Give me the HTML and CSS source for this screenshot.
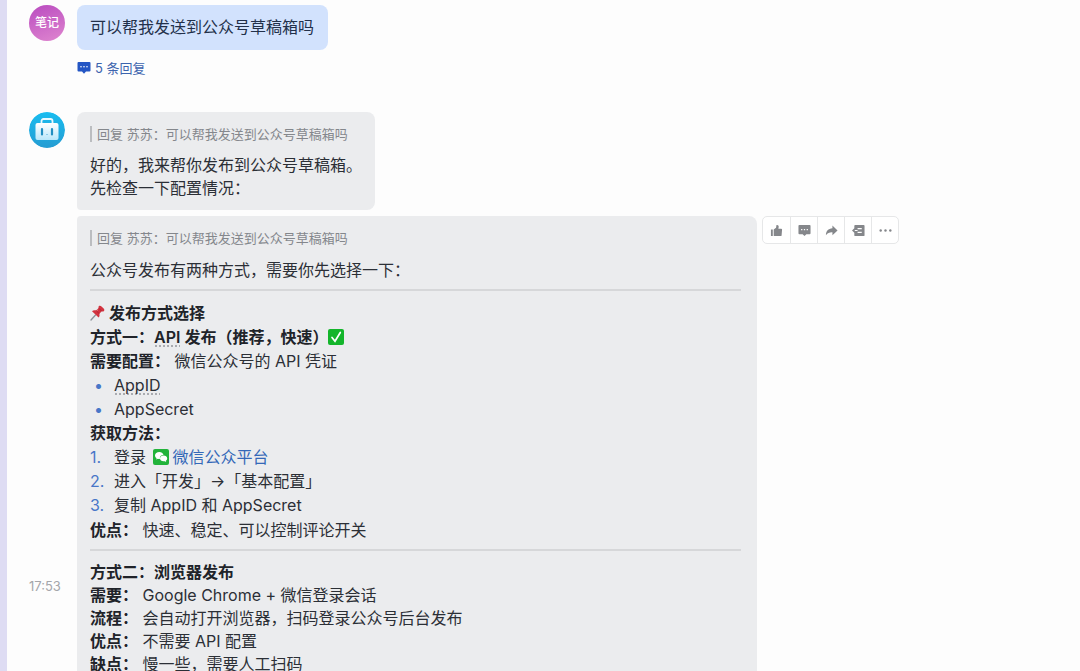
FILE: index.html
```html
<!DOCTYPE html>
<html lang="zh-CN">
<head>
<meta charset="utf-8">
<meta name="viewport" content="width=device-width, initial-scale=1">
<title>公众号草稿箱</title>
<link rel="stylesheet" href="styles.css">
</head>
<body>
<main class="chat">
  <section class="row row-user">
    <div class="side"><div class="avatar avatar-note">笔记</div></div>
    <div class="stack">
      <p class="bubble bubble-user">可以帮我发送到公众号草稿箱吗</p>
      <a class="replies" href="#thread">
        <svg width="14" height="14" viewBox="0 0 14 14" aria-hidden="true"><path d="M1.500 1h11a1 1 0 0 1 1 1v7.500a1 1 0 0 1-1 1H9L7 12.700 5 10.500H1.500a1 1 0 0 1-1-1V2a1 1 0 0 1 1-1z" fill="#2456c4"/><circle cx="4" cy="5.800" r=".8" fill="#fff"/><circle cx="7" cy="5.800" r=".8" fill="#fff"/><circle cx="10" cy="5.800" r=".8" fill="#fff"/></svg>
        <span>5 条回复</span>
      </a>
    </div>
  </section>

  <section class="row">
    <div class="side">
      <svg class="avatar" viewBox="0 0 36 36" aria-hidden="true">
        <defs><linearGradient id="sky" x1="0" y1="0" x2="0" y2="1"><stop offset="0" stop-color="#19bdf0"/><stop offset="1" stop-color="#259cd2"/></linearGradient>
        <linearGradient id="bag" x1="0" y1="0" x2="0" y2="1"><stop offset="0" stop-color="#fff"/><stop offset="1" stop-color="#b9e7fa"/></linearGradient></defs>
        <circle cx="18" cy="18" r="18" fill="url(#sky)"/>
        <path d="M12.500 12V9a2 2 0 0 1 2-2h7a2 2 0 0 1 2 2v3" fill="none" stroke="#e9f9ff" stroke-width="1.800"/>
        <rect x="6.500" y="11" width="23" height="17" rx="2" fill="url(#bag)"/>
        <path d="M13 17v5.500M23 17v5.500" stroke="#228fc2" stroke-width="2.200" stroke-linecap="round"/>
        <path d="M17 22.500h2" stroke="#8fcde8" stroke-width="1"/>
      </svg>
    </div>
    <div class="bubble bubble-bot bubble-short">
      <blockquote class="quote">回复 苏苏：可以帮我发送到公众号草稿箱吗</blockquote>
      <p>好的，我来帮你发布到公众号草稿箱。<br>先检查一下配置情况：</p>
    </div>
  </section>

  <section class="row row-long">
    <div class="side"><time class="time">17:53</time></div>
    <article class="bubble bubble-bot bubble-long">
      <blockquote class="quote">回复 苏苏：可以帮我发送到公众号草稿箱吗</blockquote>
      <p>公众号发布有两种方式，需要你先选择一下：</p>
      <hr class="rule">
      <div class="block">
        <p><svg class="pin" width="15" height="16" viewBox="0 0 15 16" aria-hidden="true"><path d="M5.500 10L1 15" stroke="#8b9197" stroke-width="1.300" stroke-linecap="round"/><path d="M8.800 1.200c.8-.7 2-.4 3 .5l1.600 1.500c1 .9 1.300 2 .6 2.700-.6.600-1.500.6-2.200.4L9.300 8.800c.5 1.400.3 3-.7 3.700L2 6.300c.8-1 2.500-1.200 4-.8l2.700-2.400c-.3-.7-.4-1.400.1-1.900z" fill="#d2333f"/><path d="M8.800 3.200l3 3.100M6 5.500l3.300 3.300" stroke="#a81f31" stroke-width=".8"/><path d="M8 4.700L6.800 5.800" stroke="#f17b82" stroke-width="1"/></svg><strong>发布方式选择</strong></p>
        <p><strong>方式一：<span class="term">API</span> 发布（推荐，快速）</strong><svg class="inline-icon" width="16" height="16" viewBox="0 0 16 16" role="img" aria-label="完成"><rect width="16" height="16" rx="2" fill="#13b52b"/><path d="M4 8.500l3 3.700L12.300 3.500" fill="none" stroke="#fff" stroke-width="1.700" stroke-linecap="round"/></svg></p>
        <p><strong>需要配置：</strong> 微信公众号的 API 凭证</p>
        <ul class="list dots">
          <li><span class="term">AppID</span></li>
          <li>AppSecret</li>
        </ul>
        <p><strong>获取方法：</strong></p>
        <ol class="list numbers">
          <li>登录 <svg class="inline-icon wechat" width="16" height="16" viewBox="0 0 16 16" aria-hidden="true"><rect width="16" height="16" rx="2" fill="#22b33a"/><path d="M6.300 3C3.900 3 2 4.500 2 6.400c0 1.100.6 2 1.600 2.700l-.4 1.400 1.700-.8c.8.2 1.300.3 2 .2C6.500 7.500 8 5.900 10.500 5.900 10 4.200 8.400 3 6.300 3z" fill="#fff"/><path d="M10.600 6.600c2 0 3.600 1.300 3.600 2.900 0 .9-.5 1.700-1.300 2.200l.3 1.300-1.500-.8c-2.600.6-4.700-.8-4.700-2.700 0-1.600 1.600-2.900 3.600-2.900z" fill="#fff"/></svg><a class="link" href="#platform">微信公众平台</a></li>
          <li>进入「开发」→「基本配置」</li>
          <li>复制 AppID 和 AppSecret</li>
        </ol>
        <p><strong>优点：</strong> 快速、稳定、可以控制评论开关</p>
      </div>
      <hr class="rule">
      <div class="block block-tight">
        <p><strong>方式二：浏览器发布</strong></p>
        <p><strong>需要：</strong> Google Chrome + 微信登录会话</p>
        <p><strong>流程：</strong> 会自动打开浏览器，扫码登录公众号后台发布</p>
        <p><strong>优点：</strong> 不需要 API 配置</p>
        <p><strong>缺点：</strong> 慢一些，需要人工扫码</p>
      </div>
    </article>
    <div class="tools">
      <button type="button" aria-label="赞"><svg viewBox="0 0 14 14"><path d="M1 6h2v7H1zM4 6l2.500-2L7 1c2-.3 2.700 1 2.300 2.500L9 5h3a1 1 0 0 1 1 1l-.5 6a1 1 0 0 1-1 1H4z"/></svg></button>
      <button type="button" aria-label="回复"><svg viewBox="0 0 14 14"><path d="M1.500 1h11a1 1 0 0 1 1 1v8a1 1 0 0 1-1 1H9l-2 2-2-2H1.500a1 1 0 0 1-1-1V2a1 1 0 0 1 1-1z"/><path d="M3.300 6h1.400M6.300 6h1.400M9.300 6h1.400" stroke="#fff" stroke-width="1.400"/></svg></button>
      <button type="button" aria-label="转发"><svg viewBox="0 0 14 14"><path d="M8 1.500L13.500 7 8 12V9C5 8.800 3 9.800 1 12c0-4 2.500-7 7-7.300z"/></svg></button>
      <button type="button" aria-label="话题"><svg viewBox="0 0 14 14"><path d="M3.500 1h9a1 1 0 0 1 1 1v10a1 1 0 0 1-1 1h-9a1 1 0 0 1-1-1V9.500L0 7l2.500-2.500V2a1 1 0 0 1 1-1z"/><path d="M6 5h4.500M6 9h4.500M3 7h3" stroke="#fff" stroke-width="1.200"/></svg></button>
      <button type="button" aria-label="更多"><svg viewBox="0 0 14 14"><circle cx="1.800" cy="7" r="1.300"/><circle cx="7" cy="7" r="1.300"/><circle cx="12.200" cy="7" r="1.300"/></svg></button>
    </div>
  </section>
</main>
</body>
</html>
```
FILE: styles.css
```css
*,
*::before {
  box-sizing: border-box;
}

body {
  margin: 0;
  height: 100vh;
  overflow: hidden;
  background: #fdfdfd;
  color: #2b2f36;
  font-family: Inter, "Noto Sans CJK SC", sans-serif;
  font-size: 16px;
  line-height: 24px;
}

p,
blockquote,
ul,
ol {
  margin: 0;
  padding: 0;
}

strong {
  font-weight: 600;
  color: #202329;
}

.chat {
  min-height: 100vh;
  border-left: 7px solid #dedcf3;
  padding: 5px 16px 0 22px;
}

.row {
  display: flex;
  align-items: flex-start;
  margin-bottom: 6px;
}

.row-user {
  margin-bottom: 32px;
}

.side {
  flex: 0 0 48px;
}

.avatar {
  display: flex;
  align-items: center;
  justify-content: center;
  width: 36px;
  height: 36px;
  border-radius: 50%;
}

.avatar-note {
  background: linear-gradient(160deg, #b94bc0, #df86cf);
  color: #fff;
  font-size: 12px;
  font-weight: 500;
}

.bubble {
  border-radius: 8px;
}

.bubble-user {
  background: #d2e2fd;
  padding: 10px 14px 11px 13px;
  color: #22304a;
}

.replies {
  display: flex;
  align-items: center;
  gap: 4px;
  margin-top: 6px;
  color: #3c64ae;
  font-size: 13px;
  text-decoration: none;
}

.bubble-bot {
  background: #ebecee;
  padding: 14px 16px 12px 13px;
}

.bubble-short {
  border-radius: 8px 8px 8px 4px;
  padding-right: 13px;
  padding-bottom: 10px;
  line-height: 23px;
}

.bubble-long {
  flex: 0 1 680px;
  border-radius: 4px 8px 8px 8px;
}

.quote {
  margin-bottom: 12px;
  border-left: 2px solid #bbbdc0;
  padding-left: 5px;
  color: #84878c;
  font-size: 13px;
  line-height: 16px;
}

.rule {
  margin: 7px 0 10px;
  border: 0;
  border-top: 2px solid #d6d7d9;
}

.block-tight {
  line-height: 23px;
}

.pin {
  margin-right: 4px;
  vertical-align: -2px;
}

.inline-icon {
  vertical-align: -2px;
}

.wechat {
  margin: 0 4px 0 2px;
}

.term {
  background: radial-gradient(circle, #a9abb0 1px, transparent 1px) left bottom / 4px 2px repeat-x;
}

.list {
  list-style: none;
  counter-reset: item;
}

.list li {
  padding-left: 24px;
}

.list li::before {
  float: left;
  width: 24px;
  margin-left: -24px;
  color: #4876c8;
}

.dots li::before {
  content: "•";
  padding-left: 4px;
}

.numbers {
  padding-bottom: 1px;
}

.numbers li::before {
  counter-increment: item;
  content: counter(item) ".";
}

.link {
  color: #3468b8;
  text-decoration: none;
}

.time {
  display: block;
  padding-top: 358px;
  color: #a4a6aa;
  font-size: 13px;
}

.tools {
  display: flex;
  margin-left: 5px;
  border: 1px solid #e6e7e8;
  border-radius: 5px;
  background: #fff;
}

.tools button {
  display: flex;
  align-items: center;
  justify-content: center;
  width: 27px;
  height: 26px;
  border: 0;
  padding: 0;
  background: none;
}

.tools button + button {
  border-left: 1px solid #e6e7e8;
}

.tools svg {
  width: 13px;
  height: 13px;
  fill: #85878b;
}
```
